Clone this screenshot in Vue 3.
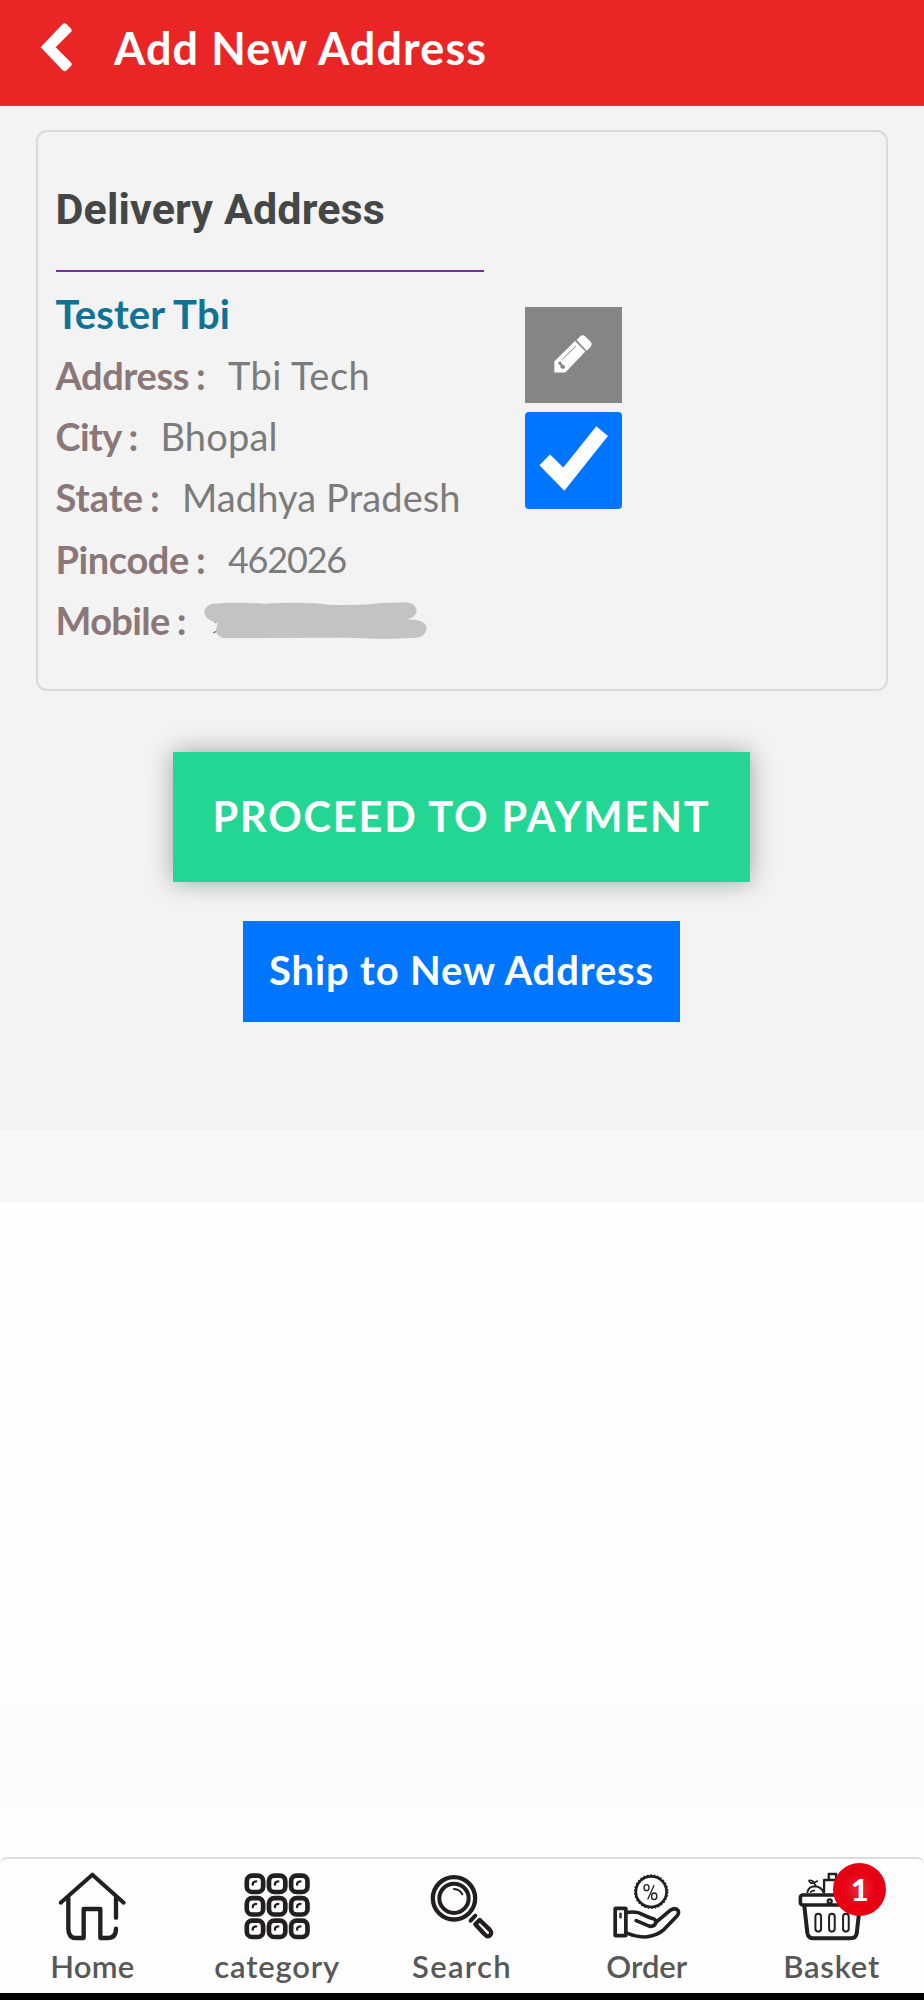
<script setup>
const fields = [
  { key: 'address', label: 'Address', value: 'Tbi Tech' },
  { key: 'city', label: 'City', value: 'Bhopal' },
  { key: 'state', label: 'State', value: 'Madhya Pradesh' },
  { key: 'pincode', label: 'Pincode', value: '462026' },
  { key: 'mobile', label: 'Mobile', value: '' },
]
const cells = [0, 1, 2].flatMap((r) => [0, 1, 2].map((c) => ({ x: 741 + c * 66.5, y: 107 + r * 67.5 })))
</script>

<template>
  <div class="page">
    <header class="bar">
      <svg class="back" viewBox="117 60 105 165"><path d="M122 142 L188 72 Q194 67 200 73 L213 86 Q218 92 212 97 L167 142 L212 187 Q218 193 213 198 L200 211 Q194 217 188 211 Z" fill="#fff" /></svg>
      <h1 class="title">Add New Address</h1>
    </header>

    <main class="content">
      <section class="card">
        <div class="info">
          <h2 class="heading">Delivery Address</h2>
          <div class="rule"></div>
          <div class="name">Tester Tbi</div>
          <div v-for="f in fields" :key="f.key" class="row" :class="f.key">
            <span class="label">{{ f.label }}</span>
            <span class="colon">:</span>
            <span v-if="f.value" class="value">{{ f.value }}</span>
            <svg v-else class="smudge" viewBox="510 955 690 135">
              <path d="M546 1020 l9 9 M546 1060 l10 -5" stroke="#777" stroke-width="4" fill="none" />
              <path class="blot" d="M545 972 Q620 967 700 972 Q840 966 890 975 Q1000 978 1050 970 L1130 968 Q1157 974 1157 995 Q1155 1012 1128 1020 Q1184 1018 1187 1046 Q1184 1072 1155 1074 L1065 1078 L950 1074 L575 1075 Q551 1065 556 1045 L560 1030 Q518 1020 520 995 Q525 977 545 972Z" fill="#c3c3c3" />
            </svg>
          </div>
        </div>
        <div class="actions">
          <button class="edit" aria-label="Edit">
            <svg viewBox="75 80 291 289">
              <path d="M163 243 L225 182 L256 213 L196 276 L163 276Z M230 179 L240 168 Q248 161 256 168 L270 182 Q279 191 272 199 L260 211Z" fill="#fff" />
              <path d="M187 237 L228 197" stroke="#858585" stroke-width="3" />
              <path d="M174 249 Q175 242 182 243 L187 252 L195 257 Q197 264 189 266 L181 262 L182 256Z" fill="#858585" />
            </svg>
          </button>
          <button class="check" aria-label="Selected">
            <svg viewBox="75 396 291 290"><path d="M118 556 L150 524 L190 563 L289 439 L324 468 L193 633Z" fill="#fff" /></svg>
          </button>
        </div>
      </section>
      <button class="proceed"><span>PROCEED TO PAYMENT</span></button>
      <button class="ship"><span>Ship to New Address</span></button>
    </main>
    <div class="band"></div>
    <div class="blank"></div>
    <div class="faint"></div>

    <nav class="nav">
      <a class="item home">
        <svg class="icon" viewBox="169 90 216 216" fill="none" stroke="#231f20" stroke-width="13" stroke-linecap="round" stroke-linejoin="round">
          <path d="M183 188 L278 104 L372 188" stroke-width="12" />
          <path d="M206 174 V268 Q207 294 229 294 H252 V207 H302 V294 H323 Q349 294 349 266 M349 174 V233" />
        </svg>
        <span>Home</span>
      </a>
      <a class="item category">
        <svg class="icon" viewBox="723.6 90 216 216" fill="none" stroke="#231f20">
          <g v-for="(c, i) in cells" :key="i">
            <rect :x="c.x" :y="c.y" width="49" height="49" rx="16" stroke-width="14" />
            <path :d="`M${c.x + 18} ${c.y + 27} q-1 -9 10 -10`" stroke-width="7" stroke-linecap="round" />
          </g>
        </svg>
        <span>category</span>
      </a>
      <a class="item search">
        <svg class="icon" viewBox="108 90 216 216" fill="none" stroke="#231f20" stroke-linecap="round" stroke-linejoin="round">
          <circle cx="192" cy="175" r="63.500" stroke-width="13" />
          <circle cx="192" cy="175" r="44" stroke-width="12" />
          <path d="M192 147 Q210 148 217 163" stroke-width="6" />
          <path d="M242 242 L256 227" stroke-width="12" />
          <path d="M256 253 L269 240 L299 269 Q308 280 299 287 Q291 292 283 282Z" stroke-width="13" />
        </svg>
        <span>Search</span>
      </a>
      <a class="item order">
        <svg class="icon" viewBox="662.4 90 216 216" fill="none" stroke="#231f20" stroke-width="11" stroke-linecap="round" stroke-linejoin="round">
          <circle cx="783" cy="155" r="46" stroke-width="8" />
          <circle cx="783" cy="155" r="50" stroke-width="4" stroke-dasharray="5 5.5" stroke-linecap="butt" />
          <g stroke-width="4"><ellipse cx="769" cy="143" rx="7.500" ry="9" /><ellipse cx="792" cy="169" rx="8" ry="10" /><path d="M791 137 L773 177" /></g>
          <rect x="675" y="205" width="32" height="82" rx="2" stroke-width="11" />
          <path d="M691 221 V232" stroke-width="7" />
          <path d="M712 217 Q741 213 758 224 Q771 231 789 236 Q798 240 797 247 L840 211 Q856 201 864 212 Q867 219 861 227 L822 268 Q801 287 766 291 Q740 291 712 280" />
          <path d="M738 242 L779 259 Q795 260 797 246" />
        </svg>
        <span>Order</span>
      </a>
      <a class="item basket">
        <svg class="icon" viewBox="166.800 90 216 216" fill="none" stroke="#231f20" stroke-width="8" stroke-linecap="round" stroke-linejoin="round">
          <path d="M201 157 Q204 139 225 139 Q243 141 249 157" stroke-width="6" />
          <path d="M226 138 L221 128 Q209 133 206 122 Q216 119 221 128 L231 123 M211 156 q4 -5 11 -4" stroke-width="5" />
          <path d="M251 157 V120 H292 M265 118 V102 H287 V118" stroke-width="7" />
          <rect x="180" y="165" width="180" height="30" rx="7" stroke-width="11" />
          <circle cx="268" cy="184" r="6" stroke-width="7" />
          <path d="M192 200 L201 280 Q204 295 220 295 H330 Q347 295 349 280 L358 200" stroke-width="12" />
          <g stroke-width="6"><rect x="225" y="221" width="17" height="54" rx="8.500" /><rect x="266" y="221" width="17" height="54" rx="8.500" /><rect x="308" y="221" width="17" height="54" rx="8.500" /></g>
        </svg>
        <span>Basket</span>
        <b class="badge">1</b>
      </a>
    </nav>
    <div class="system"></div>
  </div>
</template>

<style>
body { background: #fff; }
</style>

<style scoped>
* { box-sizing: border-box; margin: 0; }
.page { width: 924px; height: 2000px; overflow: hidden; display: flex; flex-direction: column; font-family: Lato, sans-serif; background: #fefefe; }
button { border: 0; padding: 0; font-family: inherit; display: flex; align-items: center; justify-content: center; }
span, h1, h2 { white-space: nowrap; }
.bar { height: 106px; flex: none; background: #e92526; border-bottom: 1px solid #cf4444; display: flex; align-items: center; }
.back { width: 35px; height: 55px; margin: -11px 0 0 39px; }
.title { color: #fff; font-size: 45px; line-height: 54px; font-weight: 700; letter-spacing: 1.100px; margin: -9px 0 0 40px; }
.content { height: 1024px; flex: none; background: #f3f3f3; padding-top: 24px; display: flex; flex-direction: column; align-items: center; }
.card { width: 852px; height: 561px; margin-right: 1px; border: 2px solid #dadada; border-radius: 11px; display: flex; padding: 0 18px; }
.info { width: 428px; }
.heading { font: 700 43px/52px Roboto, sans-serif; letter-spacing: .150px; color: #454746; margin-top: 51px; }
.rule { height: 2px; background: #7b2ca0; margin: 35px 0 11.600px; }
.name { font-size: 40px; line-height: 61.200px; font-weight: 700; letter-spacing: .120px; color: #0f7398; }
.row { display: flex; font-size: 38px; height: 61.300px; line-height: 61.300px; align-items: center; }
.label, .colon { color: #8b7777; font-weight: 700; }
.colon { margin-left: 7px; width: 32px; }
.value { color: #7b7b7b; }
.address .label { letter-spacing: -.430px; }
.address .value { letter-spacing: .500px; }
.city .label { letter-spacing: -.750px; }
.city .value { letter-spacing: .200px; }
.state .value { letter-spacing: .100px; }
.pincode .label { letter-spacing: -.400px; }
.pincode .value { font-size: 36px; letter-spacing: -1.200px; }
.mobile .label { letter-spacing: -.650px; }
.smudge { width: 230px; height: 45px; margin-left: -8px; }
.blot { filter: blur(2px); }
.actions { margin: 175px 0 0 41px; display: flex; flex-direction: column; gap: 9px; }
.actions svg { width: 97px; height: 96.500px; }
.edit { width: 97px; height: 96px; background: #858585; }
.check { width: 97px; height: 97px; background: #0075ff; border-radius: 4px; }
.proceed { width: 577px; height: 130px; margin: 61px 1px 0 0; padding-bottom: 3px; background: #23d694; color: #fff; font-size: 41.500px; font-weight: 700; letter-spacing: 1.850px; box-shadow: 0 0 24px rgba(0, 0, 0, .34); }
.ship { width: 437px; height: 101px; margin: 39px 1px 0 0; padding-bottom: 3px; background: #0075ff; color: #fff; font-size: 40px; font-weight: 700; letter-spacing: .850px; }
.band { height: 73px; flex: none; background: #f8f8f8; }
.blank { height: 504px; flex: none; }
.faint { height: 105px; flex: none; background: #fcfcfc; }
.nav { height: 136px; flex: none; margin-top: 45px; border-top: 2px solid #dcdcdc; border-radius: 7px 7px 0 0; display: flex; background: #fefefe; }
.item { flex: 1; position: relative; display: flex; flex-direction: column; align-items: center; padding-top: 11px; font-size: 31px; line-height: 38px; font-weight: 600; color: #575757; }
.icon { width: 72px; height: 72px; flex: none; }
.item span { margin-top: 5px; }
.home span { letter-spacing: .300px; }
.category span { letter-spacing: .800px; }
.search span { letter-spacing: 1.300px; }
.basket span { letter-spacing: .800px; }
.badge { position: absolute; left: 94px; top: 4px; width: 53px; height: 53px; border-radius: 50%; background: radial-gradient(circle, #e92838 0, #e60012 45%); color: #fff; font-size: 31px; line-height: 53px; text-align: center; }
.system { height: 7px; flex: none; background: #000; }
</style>
